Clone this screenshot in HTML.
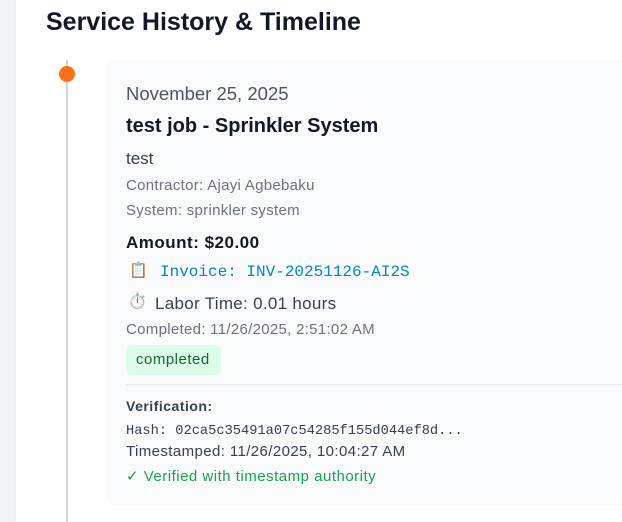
<!DOCTYPE html>
<html><head><style>
html,body{margin:0;width:622px;height:522px;overflow:hidden}
body{background:#f3f4f6;font-family:"Liberation Sans",sans-serif;position:relative}
.panel{position:absolute;left:16px;top:0;width:620px;height:530px;background:#fff;box-shadow:0 0 4px rgba(0,0,0,.06)}
.t{position:absolute;white-space:nowrap;line-height:1}
.line{position:absolute;left:66px;top:60px;width:2px;height:470px;background:#d1d5db}
.dot{position:absolute;left:59px;top:66px;width:16px;height:16px;border-radius:50%;background:#f97316}
.card{position:absolute;left:106px;top:60px;width:540px;height:445px;background:#f9fafb;border-radius:10px}
.mono{font-family:"Liberation Mono",monospace}
</style></head><body>
<div class="panel"></div>
<div class="t" style="left:46px;top:10px;font-size:25px;font-weight:bold;color:#111827">Service History &amp; Timeline</div>
<div class="line"></div><div class="dot"></div>
<div class="card"></div>
<div class="t" style="left:126px;top:85px;font-size:18.5px;color:#4b5563">November 25, 2025</div>
<div class="t" style="left:126px;top:116px;font-size:20px;font-weight:bold;color:#111827">test job - Sprinkler System</div>
<div class="t" style="left:126px;top:150px;font-size:17px;color:#374151">test</div>
<div class="t" style="left:126px;top:178px;font-size:15px;letter-spacing:.3px;color:#6b7280">Contractor: Ajayi Agbebaku</div>
<div class="t" style="left:126px;top:203px;font-size:15px;letter-spacing:.3px;color:#6b7280">System: sprinkler system</div>
<div class="t" style="left:126px;top:234px;font-size:17px;letter-spacing:.5px;font-weight:bold;color:#111827">Amount: $20.00</div>
<div class="t" style="left:129px;top:263px;font-size:15px">📋</div>
<div class="t mono" style="left:160px;top:264px;font-size:16px;color:#0284c7">Invoice: INV-20251126-AI2S</div>
<div class="t" style="left:128px;top:294px;font-size:15px">⏱️</div>
<div class="t" style="left:155px;top:295px;font-size:17px;letter-spacing:.3px;color:#374151">Labor Time: 0.01 hours</div>
<div class="t" style="left:126px;top:322px;font-size:15px;letter-spacing:.3px;color:#6b7280">Completed: 11/26/2025, 2:51:02 AM</div>
<div style="position:absolute;left:126px;top:345px;width:95px;height:30px;border-radius:5px;background:#dcfce7"></div>
<div class="t" style="left:136px;top:352px;font-size:15px;letter-spacing:.5px;color:#166534">completed</div>
<div style="position:absolute;left:126px;top:384px;width:500px;height:1px;background:#e5e7eb"></div>
<div class="t" style="left:126px;top:399px;font-size:14px;letter-spacing:.5px;font-weight:bold;color:#374151">Verification:</div>
<div class="t mono" style="left:126px;top:425px;font-size:13.7px;color:#374151">Hash: 02ca5c35491a07c54285f155d044ef8d...</div>
<div class="t" style="left:126px;top:444px;font-size:15px;letter-spacing:.4px;color:#374151">Timestamped: 11/26/2025, 10:04:27 AM</div>
<div class="t" style="left:126px;top:469px;font-size:15px;letter-spacing:.5px;color:#16a34a">✓ Verified with timestamp authority</div>
</body></html>
